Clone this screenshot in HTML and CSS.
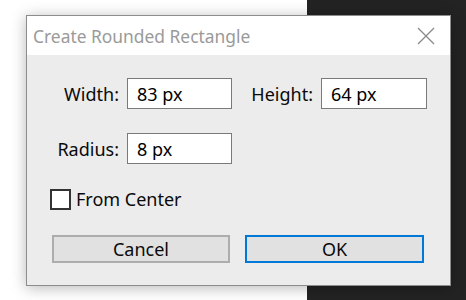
FILE: index.html
```html
<!DOCTYPE html>
<html lang="en">
<head>
    <meta charset="UTF-8">
    <meta name="viewport" content="width=device-width, initial-scale=1.0">
    <title>Create Rounded Rectangle</title>
    <link rel="stylesheet" href="styles.css">
</head>
<body>
    <div class="desktop">
        <div class="canvas-light"></div>
        <div class="canvas-dark"></div>
    </div>

    <div class="dialog">
        <div class="titlebar">
            <span class="title">Create Rounded Rectangle</span>
            <svg class="close" width="18" height="18" viewBox="0 0 18 18">
                <path d="M1 1 L17 17 M17 1 L1 17" stroke="#8a8a8a" stroke-width="1.3" fill="none"/>
            </svg>
        </div>
        <form class="content">
            <div class="fields">
                <label for="width">Width:</label>
                <input type="text" id="width" value="83 px">
                <label for="height">Height:</label>
                <input type="text" id="height" value="64 px">
                <label for="radius">Radius:</label>
                <input type="text" id="radius" value="8 px">
            </div>
            <label class="check">
                <span class="box"></span>
                From Center
            </label>
            <div class="buttons">
                <button type="button">Cancel</button>
                <button type="submit" class="primary">OK</button>
            </div>
        </form>
    </div>
</body>
</html>
```

FILE: styles.css
```css
body {
    margin: 0;
    font-family: "Noto Sans", "Open Sans", sans-serif;
    color: #111;
    overflow: hidden;
}
.desktop {
    display: flex;
    width: 466px;
    height: 300px;
}
.canvas-light {
    flex: 0 0 307px;
    background-color: #fff;
}
.canvas-dark {
    flex: 1;
    background-color: #232323;
}
.dialog {
    position: absolute;
    left: 26px;
    top: 15px;
    width: 423px;
    height: 269px;
    border: 1px solid #8c8c8c;
    background-color: #ececec;
    box-shadow: 0 2px 14px rgba(0, 0, 0, 0.28);
}
.titlebar {
    display: flex;
    align-items: center;
    justify-content: space-between;
    height: 39px;
    padding: 0 15px 0 6px;
    background-color: #fff;
}
.title {
    font-size: 17.4px;
    color: #9a9a9a;
}
.content {
    padding: 23px 0 0 0;
}
.fields {
    display: grid;
    grid-template-columns: 79px 105px 73px 106px;
    column-gap: 8px;
    row-gap: 24px;
    margin-left: 13px;
    align-items: center;
}
.fields label {
    text-align: right;
    font-size: 18px;
    color: #0a0a0a;
}
.fields input {
    width: 100%;
    height: 31px;
    box-sizing: border-box;
    border: 1px solid #7a7a7a;
    padding: 0 9px;
    font-family: inherit;
    font-size: 18px;
    color: #000;
    background-color: #fff;
}
.check {
    display: flex;
    align-items: center;
    gap: 5px;
    margin: 23px 0 0 23px;
    font-size: 18px;
    color: #0a0a0a;
}
.box {
    width: 17px;
    height: 17px;
    border: 2px solid #333;
    background-color: #fff;
}
.buttons {
    display: flex;
    gap: 15px;
    margin: 24px 0 0 25px;
}
button {
    width: 178px;
    height: 28px;
    padding: 0;
    font-family: inherit;
    font-size: 18px;
    color: #0a0a0a;
    background-color: #e1e1e1;
    border: 2px solid #adadad;
    line-height: 1;
}
button.primary {
    width: 179px;
    border-color: #0078d7;
}
```
